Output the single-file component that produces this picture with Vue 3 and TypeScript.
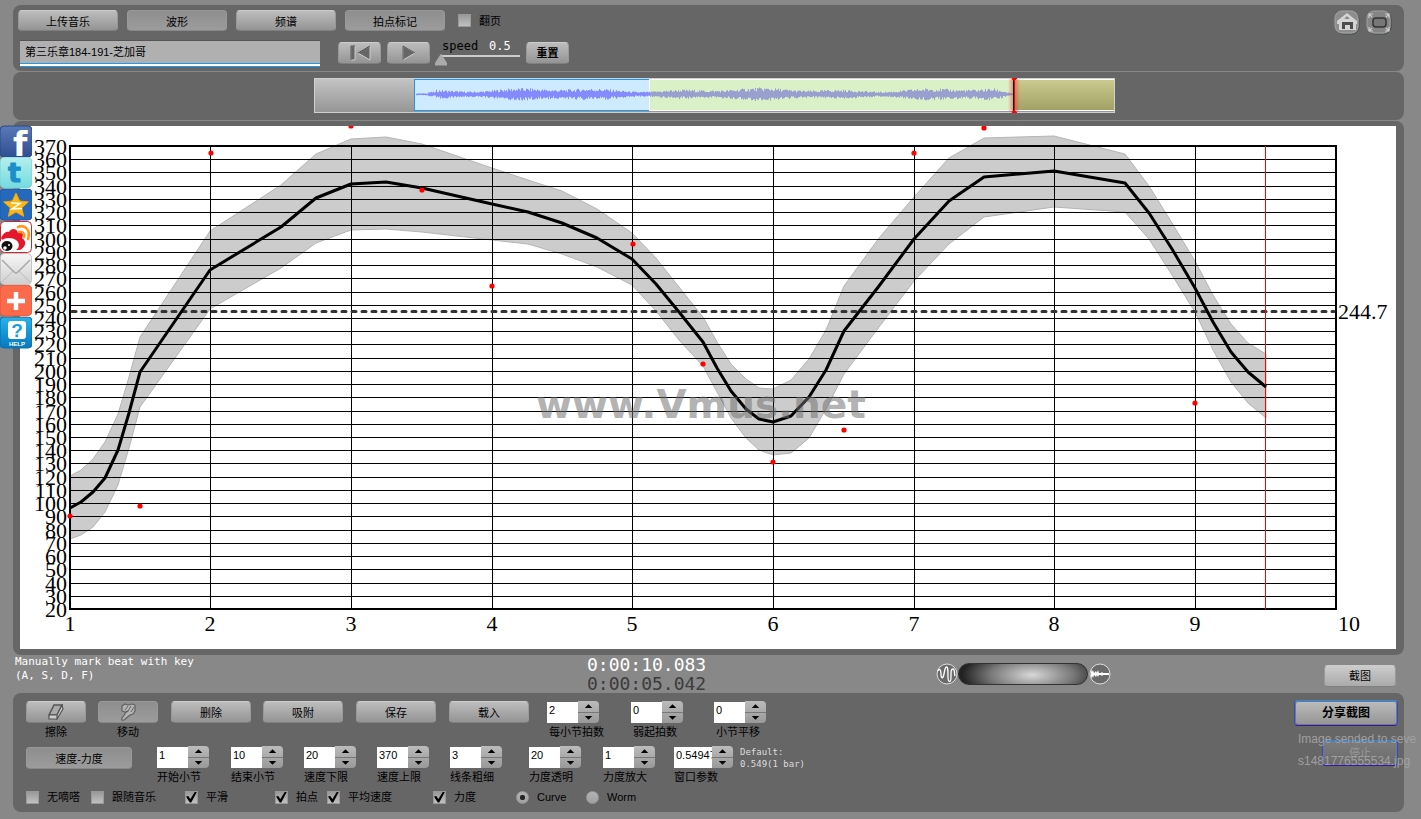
<script setup lang="ts">
import { ref } from 'vue'

interface Spinner { label: string; value: string; wide?: boolean }
interface Share { name: string; kind: string }

const title = ref('第三乐章184-191-芝加哥')
const speed = ref(0)
const balance = ref(55)

const tabs = [
  { text: '上传音乐', dim: false },
  { text: '波形', dim: true },
  { text: '频谱', dim: false },
  { text: '拍点标记', dim: true },
]
const actions = ['删除', '吸附', '保存', '载入']

const beatSpinners = ref<Spinner[]>([
  { label: '每小节拍数', value: '2' },
  { label: '弱起拍数', value: '0' },
  { label: '小节平移', value: '0' },
])
const rangeSpinners = ref<Spinner[]>([
  { label: '开始小节', value: '1' },
  { label: '结束小节', value: '10' },
  { label: '速度下限', value: '20' },
  { label: '速度上限', value: '370' },
  { label: '线条粗细', value: '3' },
  { label: '力度透明', value: '20' },
  { label: '力度放大', value: '1' },
  { label: '窗口参数', value: '0.54947', wide: true },
])
const toggles = ref([
  { label: '无嘀嗒', on: false },
  { label: '跟随音乐', on: false },
  { label: '平滑', on: true },
  { label: '拍点', on: true },
  { label: '平均速度', on: true },
  { label: '力度', on: true },
])
const mode = ref('Curve')

const shares: Share[] = [
  { name: 'Facebook', kind: 'fb' },
  { name: 'Twitter', kind: 'tw' },
  { name: 'Qzone', kind: 'qz' },
  { name: 'Weibo', kind: 'wb' },
  { name: 'Mail', kind: 'ml' },
  { name: 'More', kind: 'pl' },
  { name: 'Help', kind: 'hp' },
]

function step(s: Spinner, by: number) {
  s.value = String(Number(s.value) + by)
}

// Each sample: x, tempo, upper edge, lower edge.
const samples: number[][] = [
  [70, 508, 476, 539], [81, 502, 470, 535], [93, 492, 459, 527], [105, 478, 442, 512],
  [118, 450, 414, 485], [129, 413, 377, 448], [140, 372, 337, 407], [210, 270, 231, 309],
  [281, 227, 185, 268], [316, 198, 154, 243], [351, 184, 139, 230], [386, 182, 137, 229],
  [422, 188, 144, 232], [492, 204, 168, 240], [528, 212, 180, 244], [562, 223, 191, 254],
  [597, 238, 209, 267], [632, 259, 233, 285], [656, 284, 258, 311], [679, 312, 287, 340],
  [703, 342, 317, 366], [717, 368, 342, 392], [731, 391, 364, 418], [746, 409, 379, 438],
  [759, 419, 388, 450], [773, 422, 389, 455], [791, 416, 380, 453], [809, 397, 359, 438],
  [826, 370, 330, 409], [844, 331, 286, 374], [879, 286, 238, 327], [914, 239, 197, 281],
  [949, 201, 158, 244], [984, 177, 138, 217], [1054, 171, 136, 207], [1125, 183, 154, 212],
  [1149, 213, 186, 239], [1172, 249, 223, 275], [1195, 288, 261, 312], [1213, 322, 295, 350],
  [1231, 352, 324, 382], [1248, 372, 343, 403], [1266, 387, 354, 418],
]
const curve = samples.map((p) => `${p[0]},${p[1]}`).join(' ')
const band = [
  ...samples.map((p) => `${p[0]},${p[2]}`),
  ...samples.slice().reverse().map((p) => `${p[0]},${p[3]}`),
].join(' ')

const dots = [
  [70, 516], [140, 506], [211, 153], [351, 126], [422, 190], [492, 286], [633, 244],
  [703, 364], [773, 462], [844, 430], [914, 153], [984, 128], [1195, 403],
]

const bpmLines = Array.from({ length: 36 }, (_, i) => {
  const bpm = 370 - i * 10
  return { bpm, y: Math.round(146 + (i * 463) / 35) }
})
const bars = Array.from({ length: 10 }, (_, i) => ({ n: i + 1, x: Math.floor(70 + (i * 1266) / 9) }))

function noise(i: number) {
  const v = Math.sin(i * 12.9898) * 43758.5453
  return v - Math.floor(v)
}
function wave(from: number, to: number) {
  let d = ''
  for (let x = from; x < to; x++) {
    const t = x - 100
    let a = 3 + 0.7 * Math.sin(t / 13) + 0.8 * Math.sin(t / 33 - 2.6)
    if (t < 14) a = 0.5
    else if (t < 22) a = 1.6
    if (t > 580) a *= Math.max(0.15, (600 - t) / 20)
    const up = a * (0.55 + 0.9 * noise(x))
    const down = a * (0.55 + 0.9 * noise(x + 500))
    d += `M${x}.5 ${(16 - up).toFixed(1)}V${(16.6 + down).toFixed(1)}`
  }
  return d
}
const waveA = wave(102, 336)
const waveB = wave(336, 699)
</script>

<template>
  <div class="page">
    <nav class="shares" aria-label="share">
      <a v-for="s in shares" :key="s.kind" href="#" :aria-label="s.name">
        <svg viewBox="0 0 32 32" width="32" height="32">
          <defs>
            <linearGradient id="gfb" x1="0" y1="0" x2="0" y2="1"><stop offset="0" stop-color="#5a79b8" /><stop offset="1" stop-color="#2f4f91" /></linearGradient>
            <linearGradient id="gtw" x1="0" y1="0" x2="0" y2="1"><stop offset="0" stop-color="#b4f0ee" /><stop offset="1" stop-color="#74dbe0" /></linearGradient>
            <linearGradient id="gml" x1="0" y1="0" x2="0" y2="1"><stop offset="0" stop-color="#f6f6f6" /><stop offset="1" stop-color="#cfcfcf" /></linearGradient>
            <linearGradient id="ghp" x1="0" y1="0" x2="0" y2="1"><stop offset="0" stop-color="#27b4ea" /><stop offset="1" stop-color="#0878bd" /></linearGradient>
          </defs>
          <g v-if="s.kind === 'fb'">
            <rect x="0" y="1" width="32" height="31" rx="4" fill="url(#gfb)" stroke="#2c4a86" />
            <text class="wide" x="13" y="31" font-size="33" font-weight="bold" fill="#fff">f</text>
          </g>
          <g v-else-if="s.kind === 'tw'">
            <rect x="0" y="0" width="32" height="31" rx="5" fill="url(#gtw)" stroke="#7fd0d4" />
            <text class="wide" x="8" y="25" font-size="27" font-weight="bold" fill="#1b8fc9" stroke="#1b8fc9" stroke-linejoin="round">t</text>
          </g>
          <g v-else-if="s.kind === 'qz'">
            <rect x="0" y="0" width="32" height="31" rx="4" fill="#2569bd" stroke="#1d5aa5" />
            <path d="M16 4l3.600 8 8.700.9-6.500 5.900 1.900 8.600L16 23l-7.600 4.400 1.900-8.600L3.700 12.900l8.700-.9z" fill="#fdb813" stroke="#f5a30b" stroke-linejoin="round" />
            <path d="M11 14l9 .3-8 5.500 10-.3" fill="none" stroke="#fff" stroke-width="1.500" />
          </g>
          <g v-else-if="s.kind === 'wb'">
            <rect x="0.500" y="0.500" width="31" height="31" rx="4" fill="#fff" stroke="#d4232a" />
            <path d="M1 17c2-4 5-7 8-6 2-4 8-4 9 1 5-1 6 2 4 5 5 3 4 9-2 12H10z" fill="#e6162d" />
            <ellipse cx="9" cy="24" rx="10" ry="7" fill="#fff" />
            <ellipse cx="7" cy="25" rx="5.500" ry="5" fill="#111" />
            <circle cx="5" cy="27" r="1.800" fill="#fff" /><circle cx="9" cy="24" r="1" fill="#fff" />
            <path d="M18 6c7-3 13 3 10 12M19 11c4-1 6 2 5 5" fill="none" stroke="#ff9a1f" stroke-width="2.600" stroke-linecap="round" />
          </g>
          <g v-else-if="s.kind === 'ml'">
            <rect x="0.500" y="0.500" width="31" height="31" rx="4" fill="url(#gml)" stroke="#c4c4c4" />
            <path d="M2 29l12-12M30 29L18 17" stroke="#bbb" fill="none" />
            <path d="M2 7l12 12q2 2 4 0L30 7" stroke="#aaa" stroke-width="1.500" fill="none" />
          </g>
          <g v-else-if="s.kind === 'pl'">
            <rect x="0" y="0" width="32" height="31" rx="5" fill="#fa6a4b" stroke="#e3563a" />
            <path d="M16 7v18M7 16h18" stroke="#fff" stroke-width="4.500" />
          </g>
          <g v-else>
            <rect x="0" y="0" width="32" height="31" rx="4" fill="url(#ghp)" stroke="#0a6fae" />
            <rect x="8" y="4" width="18" height="18" rx="3" fill="#fff" />
            <text x="17" y="20" font-size="19" font-weight="bold" text-anchor="middle" fill="#18a0dd">?</text>
            <text x="17" y="29" font-size="6" font-weight="bold" text-anchor="middle" fill="#fff">HELP</text>
          </g>
        </svg>
      </a>
    </nav>

    <header class="panel top">
      <div class="top-main">
        <div class="tabs">
          <button v-for="t in tabs" :key="t.text" type="button" class="btn tab" :class="{ dim: t.dim }">{{ t.text }}</button>
          <label class="check flip"><input type="checkbox" />翻页</label>
        </div>
        <div class="transport">
          <input v-model="title" class="title" type="text" aria-label="title" />
          <div class="play">
            <button type="button" class="btn small" aria-label="rewind">
              <svg width="24" height="18" viewBox="0 0 24 18"><path d="M3 2h4v14H3zM22 2v14L10 9z" fill="#666" stroke="#ccc" /><path d="M3 16V2h4M22 2L10 9" fill="none" stroke="#444" /></svg>
            </button>
            <button type="button" class="btn small" aria-label="play">
              <svg width="24" height="18" viewBox="0 0 24 18"><path d="M6 2v14l12-7z" fill="#666" stroke="#ccc" /><path d="M6 16V2l12 7" fill="none" stroke="#555" /></svg>
            </button>
          </div>
          <div class="speed">
            <label for="speed">speed</label><output for="speed">0.5</output>
            <input id="speed" v-model="speed" type="range" min="0" max="100" />
          </div>
          <button type="button" class="btn small reset">重置</button>
        </div>
      </div>
      <div class="corner">
        <button type="button" class="glyph" aria-label="home">
          <svg width="26" height="26" viewBox="0 0 26 26">
            <rect x="2" y="2" width="23" height="22" rx="7" fill="#999" stroke="#3c4a48" />
            <rect x="1" y="1" width="23" height="22" rx="7" fill="#8d8d8d" stroke="#a4a4a4" />
            <path d="M13 3L3 11v3h2v6h17v-6h1v-3z" fill="#d4d4d4" /><path d="M8 12h11v7h-3v-4h-5v4H8z" fill="#4c4c4c" /><path d="M11 8.500l2-2 2 2z" fill="#888" stroke="#888" />
          </svg>
        </button>
        <button type="button" class="glyph" aria-label="full screen">
          <svg width="26" height="26" viewBox="0 0 26 26">
            <rect x="2" y="2" width="23" height="22" rx="7" fill="#999" stroke="#3c4a48" />
            <rect x="1" y="1" width="23" height="22" rx="7" fill="#858585" stroke="#a0a0a0" />
            <rect x="7" y="8" width="13" height="9" rx="3" fill="#777" stroke="#333" stroke-width="1.500" />
            <path d="M3 8V4h4M3 4l3 3M19 4h4v4M23 4l-3 3M3 17v4h4M3 21l3-3M19 21h4v-4M23 21l-3-3" fill="none" stroke="#ccc" stroke-width="1.200" />
          </svg>
        </button>
      </div>
    </header>

    <section class="panel overview">
      <svg viewBox="0 0 801 35">
        <defs>
          <linearGradient id="grey" x1="0" y1="0" x2="0" y2="1"><stop offset="0" stop-color="#c4c4c4" /><stop offset="1" stop-color="#959595" /></linearGradient>
          <linearGradient id="olive" x1="0" y1="0" x2="0" y2="1"><stop offset="0" stop-color="#cccc90" /><stop offset="1" stop-color="#a0a065" /></linearGradient>
          <linearGradient id="glow"><stop offset="0" stop-color="#f33" stop-opacity="0" /><stop offset="0.500" stop-color="#f33" stop-opacity="0.600" /><stop offset="1" stop-color="#f33" stop-opacity="0" /></linearGradient>
        </defs>
        <rect x="0.500" y="0.500" width="800" height="34" fill="url(#grey)" stroke="#d0d0d0" />
        <rect x="100.500" y="1.500" width="235" height="31" fill="#cdeaff" stroke="#1e9bf0" />
        <rect x="335" y="1" width="365" height="32" fill="#daf0c6" />
        <rect x="700" y="1" width="100" height="32" fill="url(#olive)" />
        <path d="M335.500 33V1.500H800M335.500 32.500H800" fill="none" stroke="#fff" />
        <path :d="waveA" stroke="#858bff" fill="none" />
        <path :d="waveB" stroke="#999fcf" fill="none" />
        <rect x="694" y="1" width="12" height="33" fill="url(#glow)" />
        <path d="M699.500 1v32" stroke="#102020" /><path d="M700.500 1v32" stroke="#c01818" />
        <path d="M698 0h5l-2 2h-2zM698 35h5l-2-2h-2z" fill="#f00" stroke="#f00" />
      </svg>
    </section>

    <main class="panel board">
      <svg viewBox="20 126 1376 523">
        <rect x="20" y="126" width="1376" height="523" fill="#fff" />
        <polygon :points="band" fill="#ccc" stroke="#b4b4b4" />
        <g class="grid">
          <path v-for="l in bpmLines" :key="l.bpm" :d="`M70 ${l.y}.5H1336`" />
          <path v-for="b in bars" :key="b.n" :d="`M${b.x}.5 146V609`" />
        </g>
        <rect x="70" y="146" width="1266" height="463" fill="none" stroke="#000" stroke-width="2" />
        <path d="M72 311.500H1334" stroke="#333" stroke-width="3" stroke-dasharray="4 6" stroke-linecap="round" />
        <path d="M1265.500 146V609" stroke="#f00" />
        <polyline :points="curve" fill="none" stroke="#000" stroke-width="3" stroke-linejoin="round" />
        <circle v-for="(d, i) in dots" :key="i" :cx="d[0]" :cy="d[1]" r="2.600" fill="#f00" />
        <g class="axis">
          <text v-for="l in bpmLines" :key="l.bpm" x="67" :y="l.y + 8" text-anchor="end">{{ l.bpm }}</text>
          <text v-for="b in bars" :key="b.n" :x="b.n === 10 ? 1349 : b.x" y="631" text-anchor="middle">{{ b.n }}</text>
          <text x="1338" y="319">244.7</text>
        </g>
        <text class="mark" x="536" y="418">www.Vmus.net</text>
      </svg>
    </main>

    <section class="status">
      <p class="hint">Manually mark beat with key<br />(A, S, D, F)</p>
      <div class="clock"><time>0:00:10.083</time><time class="total">0:00:05.042</time></div>
      <div class="mix">
        <svg width="22" height="24" viewBox="0 0 22 24"><circle cx="11" cy="12" r="10" fill="#6a6a6a" stroke="#ddd" /><path d="M2 9c1-3 3-2 3 3s2 5 3 0 1-7 2.500-7S12 9 12 15s3 6 3 0 0-8 2-8 1 4 2 7" fill="none" stroke="#fff" stroke-width="1.300" /></svg>
        <input v-model="balance" type="range" min="0" max="100" aria-label="balance" />
        <svg class="right" width="22" height="24" viewBox="0 0 22 24"><circle cx="11" cy="12" r="10" fill="#6a6a6a" stroke="#ddd" /><path d="M2 7l1 3 1-2 1 3 2-2 1 2 1-3 1 3h2l1-1 1 1h6v2h-6l-1 1-1-1h-2l-1 2-1-2-1 2-2-2-1 3-1-2-1 3z" fill="#fff" /></svg>
      </div>
      <button type="button" class="btn shot">截图</button>
    </section>

    <section class="panel controls">
      <div class="fields">
        <div class="row row-a">
          <div class="tool">
            <button id="erase" type="button" class="btn" aria-label="擦除">
              <svg width="20" height="16" viewBox="0 0 20 16"><path d="M8 1h8l-5 10H3z" fill="#aaa" stroke="#555" stroke-width="1.500" /><path d="M3 11h8v4H3zM16 1l1 4-6 10v-4z" fill="#ccc" stroke="#555" stroke-width="1.200" /></svg>
            </button>
            <label for="erase">擦除</label>
          </div>
          <div class="tool">
            <button id="move" type="button" class="btn dim" aria-label="移动">
              <svg width="20" height="18" viewBox="0 0 20 18"><path d="M4 3l3-2 3 1 4-1 3 1v6l-2 3-3 1-6 5q-3 1-2-2l3-4v-1l3-2-3 1-3-1z" fill="#b4b4b4" stroke="#606060" stroke-width="1.200" stroke-linejoin="round" /><path d="M10 3L7 7M13 3l-3 5M16 4l-3 5" stroke="#666" fill="none" /></svg>
            </button>
            <label for="move">移动</label>
          </div>
          <button v-for="a in actions" :key="a" type="button" class="btn action">{{ a }}</button>
          <div v-for="(s, i) in beatSpinners" :key="s.label" class="spin inset">
            <div class="box">
              <input :id="`beat${i}`" v-model="s.value" type="text" />
              <span class="steps"><button type="button" aria-label="up" @click="step(s, 1)"></button><button type="button" aria-label="down" @click="step(s, -1)"></button></span>
            </div>
            <label :for="`beat${i}`">{{ s.label }}</label>
          </div>
        </div>
        <div class="row row-b">
          <button type="button" class="btn dim mode">速度-力度</button>
          <div v-for="(s, i) in rangeSpinners" :key="s.label" class="spin" :class="{ broad: s.wide }">
            <div class="box">
              <input :id="`range${i}`" v-model="s.value" type="text" />
              <span class="steps"><button type="button" aria-label="up" @click="step(s, 1)"></button><button type="button" aria-label="down" @click="step(s, -1)"></button></span>
            </div>
            <label :for="`range${i}`">{{ s.label }}</label>
          </div>
          <p class="default">Default:<br />0.549(1 bar)</p>
        </div>
        <div class="row row-c">
          <label v-for="t in toggles" :key="t.label" class="check"><input v-model="t.on" type="checkbox" />{{ t.label }}</label>
          <label class="check"><input v-model="mode" type="radio" name="mode" value="Curve" />Curve</label>
          <label class="check"><input v-model="mode" type="radio" name="mode" value="Worm" />Worm</label>
        </div>
      </div>
      <div class="export">
        <button type="button" class="btn framed send">分享截图</button>
        <button type="button" class="btn framed wait" disabled>停止</button>
        <p class="notice">Image sended to seve<br />s1481776555534.jpg</p>
      </div>
    </section>
  </div>
</template>

<style>
html { background: #888; overflow: hidden; }
</style>

<style scoped>
.page {
  position: relative;
  padding: 5px 17px 7px 13px;
  font: 11px/14px "Liberation Sans", "Noto Sans CJK SC", sans-serif;
  color: #000;
}
* { box-sizing: border-box; }
p { margin: 0; }
svg { display: block; }
button, input { font: inherit; color: inherit; }
.panel { background: #666; border-radius: 8px; margin-bottom: 1px; }

.shares { position: absolute; left: 0; top: 125px; z-index: 2; }
.shares a { display: block; height: 32px; }
.shares text { font-family: "Liberation Sans", sans-serif; }
.shares .wide { font-family: "DejaVu Sans", sans-serif; }

.btn {
  display: flex;
  align-items: center;
  justify-content: center;
  height: 22px;
  padding: 0;
  border: 1px solid #999;
  border-top-color: #ccc;
  border-bottom-color: #808080;
  border-radius: 4px;
  background: linear-gradient(#bdbdbd, #949494);
}
.btn.dim { background: linear-gradient(#8e8e8e, #9c9c9c); border-color: #999 #999 #888; }

.top { display: flex; justify-content: space-between; padding: 5px 12px 4px 5px; }
.tabs { display: flex; gap: 9px; align-items: center; }
.tab { width: 100px; height: 21px; padding-top: 2px; }
.flip { margin-left: 4px; }
.transport { display: flex; margin-top: 9px; padding-left: 2px; }
.title {
  width: 300px;
  height: 27px;
  padding: 0 5px 5px;
  border: 0;
  border-top: 1px solid #555;
  border-bottom: 1px solid #1e9bf0;
  background: linear-gradient(#1e9bf0, #1e9bf0) 0 22px / 100% 1px no-repeat, linear-gradient(#fff, #fff) 0 23px / 100% 2px no-repeat, #b0b0b0;
}
.play { display: flex; gap: 6px; margin: 2px 0 0 18px; }
.small { width: 43px; height: 22px; }
.speed { display: grid; grid-template-columns: 49px 31px; width: 80px; margin-left: 10px; font: 12px/12px "DejaVu Sans Mono", monospace; }
.speed label { padding-left: 2px; }
.speed output { color: #fff; }
.speed input {
  grid-column: 1 / 3;
  width: 88px;
  height: 14px;
  margin: 0 0 0 -5px;
  appearance: none;
  background: linear-gradient(#ccc, #ccc) 5px 2px / 80px 2px no-repeat;
}
.speed input::-webkit-slider-thumb { appearance: none; width: 12px; height: 12px; background: #aaa; clip-path: polygon(50% 0, 100% 80%, 100% 100%, 0 100%, 0 80%); }
.reset { margin: 2px 0 0 6px; font-weight: bold; }
.corner { display: flex; gap: 6px; padding-top: 0; align-items: flex-start; }
.glyph { padding: 0; border: 0; background: none; }

.check { display: flex; align-items: center; gap: 8px; white-space: nowrap; }
.check input {
  appearance: none;
  width: 13px;
  height: 13px;
  margin: 0;
  background: linear-gradient(#999, #c0c0c0);
  border: 1px solid #999;
}
.check input[type="checkbox"]:checked::before {
  content: "";
  display: block;
  width: 11px;
  height: 11px;
  background: #000;
  clip-path: polygon(0 45%, 20% 40%, 40% 68%, 82% 0, 100% 0, 48% 100%, 34% 100%);
}
.check input[type="radio"] { border-radius: 50%; background: linear-gradient(#b4b4b4, #a0a0a0); }
.check input[type="radio"]:checked::before { content: ""; display: block; width: 5px; height: 5px; margin: 3px; border-radius: 2px; background: #222; }

.overview { display: flex; justify-content: center; padding: 6px 0 7px 11px; }
.overview svg { width: 58%; min-width: 801px; height: 35px; }
.board { padding: 5px 8px 6px 7px; margin: 0; }
.board svg { width: 100%; }
.grid { stroke: #000; stroke-width: 1; fill: none; shape-rendering: crispEdges; }
.axis { font: 22px "Liberation Serif", serif; }
.mark { font: bold 39px "DejaVu Sans", sans-serif; fill: #707070; fill-opacity: 0.55; }

.status { display: grid; grid-template-columns: 574fr 349fr 388fr 72px; height: 38px; padding-right: 8px; }
.hint { font: 11px/14px "DejaVu Sans Mono", monospace; color: #fff; padding-left: 2px; }
.clock { font: 18px/19px "DejaVu Sans Mono", monospace; color: #fff; }
.clock time { display: block; }
.clock .total { color: #3c3c3c; }
.mix { display: flex; align-items: center; height: 37px; }
.mix input {
  appearance: none;
  width: 130px;
  height: 22px;
  margin: 0 1px 0 0;
  border-radius: 11px;
  border: 1px solid #333;
  background: radial-gradient(ellipse 70px 26px at 57% 55%, #d8d8d8, #777 60%, #222);
}
.mix input::-webkit-slider-thumb { appearance: none; width: 10px; height: 20px; background: transparent; }
.shot { margin-top: 10px; background: linear-gradient(#ccc, #aaa); }

.controls { position: relative; display: flex; justify-content: space-between; padding: 8px 6px 9px 13px; margin: 0; }
.row { display: grid; justify-items: start; align-items: start; }
.row-a { grid-template-columns: 72px 73px 92px 93px 93px 98px 84px 83px 60px; height: 45px; }
.row-b { grid-template-columns: 131px 74px 73px 73px 73px 79px 74px 71px 66px 90px; height: 44px; }
.row-c { grid-template-columns: 65px 94px 90px 52px 106px 83px 70px 60px; height: 13px; align-items: center; }
.tool { display: grid; justify-items: center; gap: 2px; }
.tool .btn { width: 60px; }
.action { width: 80px; padding-top: 2px; }
.mode { width: 106px; margin-top: 1px; padding-top: 2px; }
.spin label { display: block; margin-top: 2px; white-space: nowrap; }
.inset label { padding-left: 2px; }
.box { display: flex; }
.box input { width: 31px; height: 21px; margin: 1px 0 0; padding: 0 0 5px 2px; border: 0; background: #fff; }
.broad .box input { width: 38px; }
.steps { display: grid; width: 21px; height: 22px; border-radius: 0 4px 4px 0; overflow: hidden; background: linear-gradient(#bbb, #999); }
.steps button { display: grid; place-items: center; padding: 0; border: 0; background: none; }
.steps button:first-child { border-bottom: 1px solid #777; }
.steps button::before { content: ""; width: 8px; height: 4px; background: #000; clip-path: polygon(50% 0, 100% 100%, 0 100%); }
.steps button:last-child::before { clip-path: polygon(0 0, 100% 0, 50% 100%); }
.default { font: 9px/12px "DejaVu Sans Mono", monospace; color: #ddd; }

.export { display: flex; flex-direction: column; align-items: flex-end; gap: 14px; margin-top: -1px; }
.framed { height: 26px; border: 1px solid; border-color: #1e8cff #2b4be0 #3018b0; box-shadow: inset 0 0 0 1px #777; }
.send { width: 104px; font-weight: bold; font-size: 12px; }
.wait { width: 76px; color: #999; background: linear-gradient(#7d7d7d, #6a6a6a); }
.notice { position: absolute; left: calc(100% - 106px); top: 35px; font-size: 12px; line-height: 22px; color: #a0a0a0; white-space: nowrap; }
</style>
